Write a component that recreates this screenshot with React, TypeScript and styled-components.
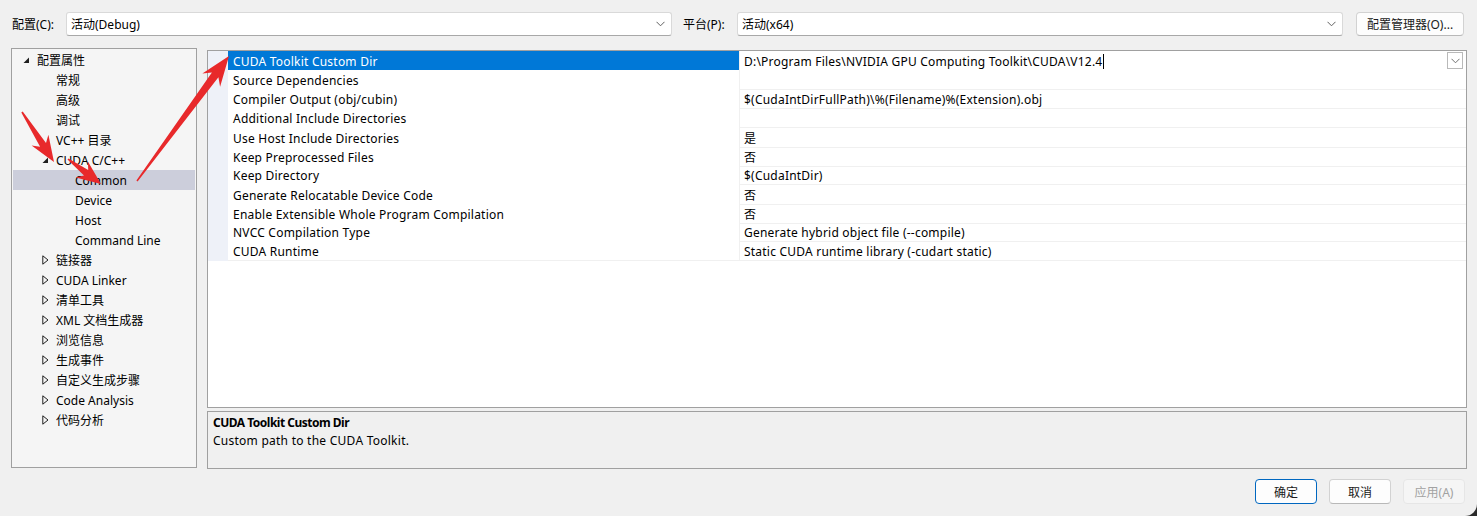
import React from 'react';
import styled, { createGlobalStyle } from 'styled-components';

const GlobalStyle = createGlobalStyle`
  html, body {
    margin: 0;
    padding: 0;
    background: #2b2b2b;
  }
  body {
    font-family: "Noto Sans", "Noto Sans CJK SC", sans-serif;
    font-size: 12px;
    color: #000;
  }
`;

const Window = styled.div`
  position: relative;
  width: 1477px;
  height: 516px;
  background: #f0f0f0;
  border-bottom-right-radius: 12px;
  overflow: hidden;
`;

const TopBar = styled.div`
  display: flex;
  align-items: center;
  height: 24px;
  padding: 12px 0 0 12px;
`;

const FieldLabel = styled.span<{ $width: number }>`
  width: ${(p) => p.$width}px;
  flex: none;
  white-space: nowrap;
`;

const Combo = styled.div`
  display: flex;
  align-items: center;
  justify-content: space-between;
  box-sizing: border-box;
  width: 606px;
  height: 24px;
  padding: 0 6px 0 4px;
  background: #fff;
  border: 1px solid #d9d9d9;
  border-bottom-color: #a8a8a8;
  border-radius: 3px;
  flex: none;
`;

const PushButton = styled.button<{ $primary?: boolean; $width: number }>`
  box-sizing: border-box;
  width: ${(p) => p.$width}px;
  height: 25px;
  padding: 0;
  font: inherit;
  color: ${(p) => (p.disabled ? '#a2a2a2' : '#1a1a1a')};
  background: ${(p) => (p.disabled ? '#f5f5f5' : '#fdfdfd')};
  border: 1px solid ${(p) => (p.$primary ? '#0067c0' : p.disabled ? '#e6e6e6' : '#d2d2d2')};
  border-bottom-color: ${(p) => (p.$primary ? '#0067c0' : p.disabled ? '#e6e6e6' : '#b8b8b8')};
  border-radius: 4px;
  flex: none;
`;

const ManagerButton = styled(PushButton)`
  height: 24px;
  margin-left: 13px;
`;

const Main = styled.div`
  display: flex;
  padding: 12px 0 0 11px;
`;

const Tree = styled.div`
  box-sizing: border-box;
  width: 186px;
  height: 420px;
  padding: 1px 1px;
  background: #f5f5f5;
  border: 1px solid #a0a0a0;
  flex: none;
`;

const TreeRow = styled.div<{ $level: number; $selected?: boolean }>`
  display: flex;
  align-items: center;
  height: 20px;
  padding-left: ${(p) => 7 + p.$level * 19}px;
  background: ${(p) => (p.$selected ? '#cccedb' : 'transparent')};
  white-space: nowrap;
`;

const Expander = styled.span`
  display: flex;
  align-items: center;
  justify-content: center;
  width: 13px;
  height: 20px;
  margin-right: 4px;
  flex: none;
`;

const RightColumn = styled.div`
  display: flex;
  flex-direction: column;
  margin-left: 10px;
  width: 1260px;
`;

const Grid = styled.div`
  box-sizing: border-box;
  height: 358px;
  margin-top: 2px;
  background: #fff;
  border: 1px solid #a0a0a0;
  letter-spacing: 0.22px;
`;

const GridRow = styled.div`
  display: grid;
  grid-template-columns: 20px 511px 1fr;
  height: 19px;
`;

const Gutter = styled.div`
  background: #eef1f8;
`;

const NameCell = styled.div<{ $selected?: boolean }>`
  display: flex;
  align-items: center;
  padding: 2px 0 0 5px;
  background: ${(p) => (p.$selected ? '#0078d7' : '#fff')};
  color: ${(p) => (p.$selected ? '#fff' : '#000')};
  border-bottom: 1px solid ${(p) => (p.$selected ? '#0078d7' : '#f0f0f0')};
  white-space: nowrap;
`;

const ValueCell = styled.div<{ $editing?: boolean }>`
  display: flex;
  align-items: center;
  padding: 2px 3px 0 4px;
  border-left: 1px solid #f0f0f0;
  border-bottom: 1px solid ${(p) => (p.$editing ? '#fff' : '#f0f0f0')};
  white-space: nowrap;
`;

const Caret = styled.span`
  display: inline-block;
  width: 1px;
  height: 15px;
  margin-left: 1px;
  background: #000;
`;

const DropButton = styled.span`
  display: flex;
  align-items: center;
  justify-content: center;
  box-sizing: border-box;
  width: 16px;
  height: 17px;
  margin-left: auto;
  margin-top: -2px;
  border: 1px solid #b9b9b9;
  background: #fff;
`;

const Description = styled.div`
  box-sizing: border-box;
  height: 58px;
  margin-top: 3px;
  padding: 2px 5px;
  background: #f0f0f0;
  border: 1px solid #a0a0a0;
  line-height: 18px;
  letter-spacing: 0.25px;
`;

const DescTitle = styled.div`
  font-weight: 700;
  letter-spacing: -0.5px;
`;

const Footer = styled.div`
  display: flex;
  justify-content: flex-end;
  gap: 12px;
  padding: 10px 12px 0 0;
`;

const Overlay = styled.svg`
  position: absolute;
  left: 0;
  top: 0;
  width: 1477px;
  height: 516px;
  pointer-events: none;
`;

const Chevron = ({ color = '#606060' }: { color?: string }) => (
  <svg width="9" height="6" viewBox="0 0 9 6">
    <path d="M0.5 0.8 L4.5 4.8 L8.5 0.8" fill="none" stroke={color} strokeWidth="1" />
  </svg>
);

const OpenArrow = () => (
  <svg width="7" height="7" viewBox="0 0 7 7">
    <polygon points="6,0.5 6,6 0.5,6" fill="#1e1e1e" />
  </svg>
);

const ClosedArrow = () => (
  <svg width="7" height="10" viewBox="0 0 7 10">
    <polygon points="0.8,0.8 6,5 0.8,9.2" fill="none" stroke="#1e1e1e" strokeWidth="1" />
  </svg>
);

type TreeItem = { label: string; level: number; state?: 'open' | 'closed'; selected?: boolean };

const treeItems: TreeItem[] = [
  { label: '配置属性', level: 0, state: 'open' },
  { label: '常规', level: 1 },
  { label: '高级', level: 1 },
  { label: '调试', level: 1 },
  { label: 'VC++ 目录', level: 1 },
  { label: 'CUDA C/C++', level: 1, state: 'open' },
  { label: 'Common', level: 2, selected: true },
  { label: 'Device', level: 2 },
  { label: 'Host', level: 2 },
  { label: 'Command Line', level: 2 },
  { label: '链接器', level: 1, state: 'closed' },
  { label: 'CUDA Linker', level: 1, state: 'closed' },
  { label: '清单工具', level: 1, state: 'closed' },
  { label: 'XML 文档生成器', level: 1, state: 'closed' },
  { label: '浏览信息', level: 1, state: 'closed' },
  { label: '生成事件', level: 1, state: 'closed' },
  { label: '自定义生成步骤', level: 1, state: 'closed' },
  { label: 'Code Analysis', level: 1, state: 'closed' },
  { label: '代码分析', level: 1, state: 'closed' },
];

const properties: [string, string][] = [
  ['CUDA Toolkit Custom Dir', 'D:\\Program Files\\NVIDIA GPU Computing Toolkit\\CUDA\\V12.4'],
  ['Source Dependencies', ''],
  ['Compiler Output (obj/cubin)', '$(CudaIntDirFullPath)\\%(Filename)%(Extension).obj'],
  ['Additional Include Directories', ''],
  ['Use Host Include Directories', '是'],
  ['Keep Preprocessed Files', '否'],
  ['Keep Directory', '$(CudaIntDir)'],
  ['Generate Relocatable Device Code', '否'],
  ['Enable Extensible Whole Program Compilation', '否'],
  ['NVCC Compilation Type', 'Generate hybrid object file (--compile)'],
  ['CUDA Runtime', 'Static CUDA runtime library (-cudart static)'],
];

// tapered annotation arrow, from tail to tip
function arrowPoints(x1: number, y1: number, x2: number, y2: number, headLen: number, headW: number, shaftW: number) {
  const dx = x2 - x1;
  const dy = y2 - y1;
  const len = Math.hypot(dx, dy);
  const ux = dx / len;
  const uy = dy / len;
  const nx = -uy;
  const ny = ux;
  const bx = x2 - ux * headLen;
  const by = y2 - uy * headLen;
  const nbx = x2 - ux * headLen * 0.78;
  const nby = y2 - uy * headLen * 0.78;
  const pts = [
    [x1 + nx * 0.8, y1 + ny * 0.8],
    [nbx + nx * shaftW / 2, nby + ny * shaftW / 2],
    [bx + nx * headW / 2, by + ny * headW / 2],
    [x2, y2],
    [bx - nx * headW / 2, by - ny * headW / 2],
    [nbx - nx * shaftW / 2, nby - ny * shaftW / 2],
    [x1 - nx * 0.8, y1 - ny * 0.8],
  ];
  return pts.map(([x, y]) => `${x.toFixed(1)},${y.toFixed(1)}`).join(' ');
}

export default function App() {
  return (
    <>
      <GlobalStyle />
      <Window>
        <TopBar>
          <FieldLabel $width={54}>配置(C):</FieldLabel>
          <Combo>
            <span>活动(Debug)</span>
            <Chevron />
          </Combo>
          <FieldLabel $width={54} style={{ marginLeft: 11 }}>平台(P):</FieldLabel>
          <Combo>
            <span>活动(x64)</span>
            <Chevron />
          </Combo>
          <ManagerButton type="button" $width={108}>配置管理器(O)...</ManagerButton>
        </TopBar>

        <Main>
          <Tree>
            {treeItems.map((item) => (
              <TreeRow key={item.label} $level={item.level} $selected={item.selected}>
                <Expander>
                  {item.state === 'open' && <OpenArrow />}
                  {item.state === 'closed' && <ClosedArrow />}
                </Expander>
                {item.label}
              </TreeRow>
            ))}
          </Tree>

          <RightColumn>
            <Grid>
              {properties.map(([name, value], i) => (
                <GridRow key={name}>
                  <Gutter />
                  <NameCell $selected={i === 0}>{name}</NameCell>
                  <ValueCell $editing={i === 0}>
                    {value}
                    {i === 0 && (
                      <>
                        <Caret />
                        <DropButton>
                          <Chevron color="#707070" />
                        </DropButton>
                      </>
                    )}
                  </ValueCell>
                </GridRow>
              ))}
            </Grid>
            <Description>
              <DescTitle>CUDA Toolkit Custom Dir</DescTitle>
              <div>Custom path to the CUDA Toolkit.</div>
            </Description>
          </RightColumn>
        </Main>

        <Footer>
          <PushButton type="button" $primary $width={62}>确定</PushButton>
          <PushButton type="button" $width={62}>取消</PushButton>
          <PushButton type="button" $width={62} disabled>应用(A)</PushButton>
        </Footer>

        <Overlay viewBox="0 0 1477 516">
          <polygon points={arrowPoints(137, 181, 229, 56, 30, 22, 8)} fill="#e8292b" />
          <polygon points={arrowPoints(22, 112, 54, 162, 26, 20, 7)} fill="#e8292b" />
          <polygon points={arrowPoints(68, 159, 101, 184, 24, 20, 7)} fill="#e8292b" />
        </Overlay>
      </Window>
    </>
  );
}
